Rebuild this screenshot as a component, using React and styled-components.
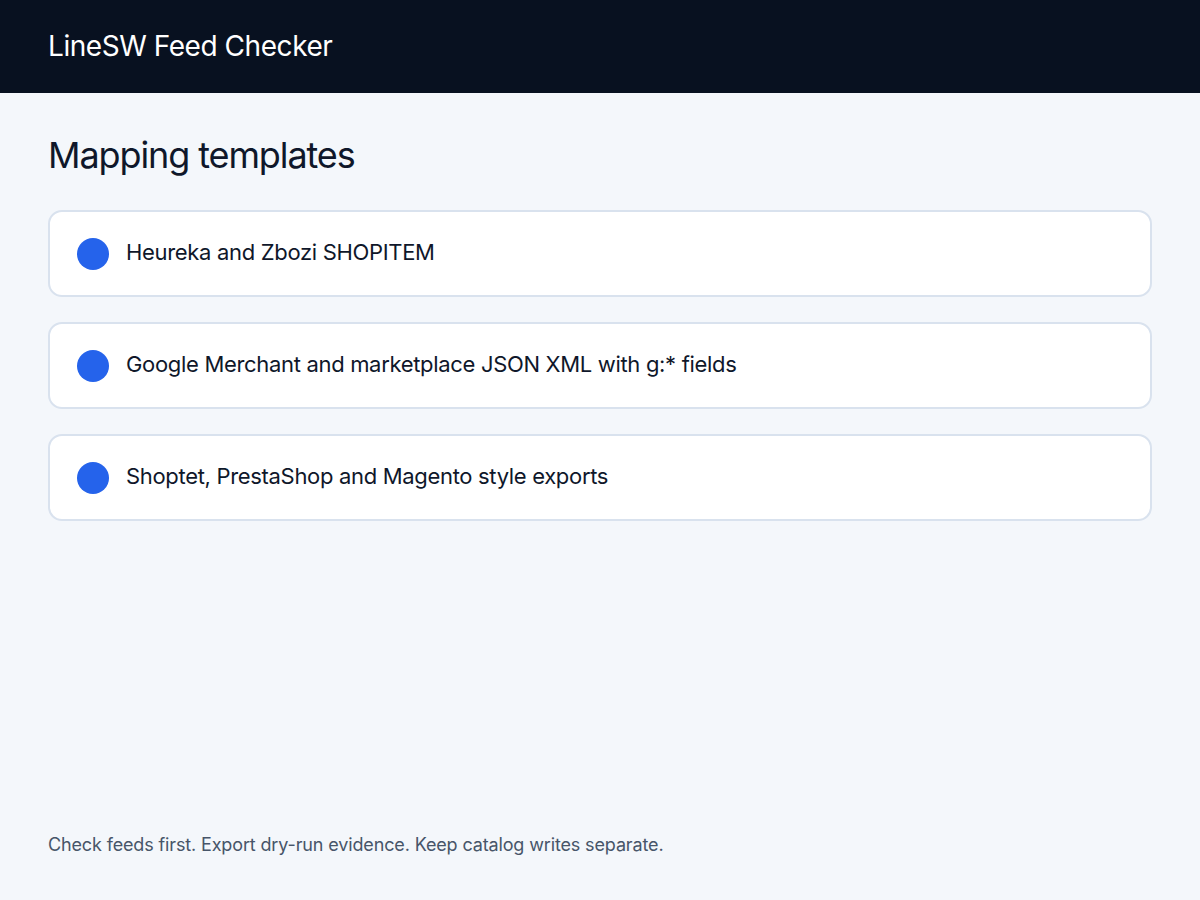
import React from 'react';
import styled, { createGlobalStyle } from 'styled-components';

const GlobalStyle = createGlobalStyle`
    html, body {
        margin: 0;
        padding: 0;
        background-color: #f4f7fb;
        font-family: Inter, "Noto Sans", sans-serif;
    }
    * {
        box-sizing: border-box;
    }
`

const Page = styled.div`
    display: flex;
    flex-flow: column;
    min-height: 100vh;
    background-color: #f4f7fb;
    color: #0f172a;
`

const TopBar = styled.header`
    display: flex;
    align-items: center;
    height: 93px;
    padding: 0px 48px 2px 48px;
    background-color: #081120;
`

const AppTitle = styled.h1`
    margin: 0px;
    font-size: 28px;
    font-weight: 400;
    color: #ffffff;
    letter-spacing: -0.45px;
`

const Main = styled.main`
    display: flex;
    flex-flow: column;
    padding: 40px 48px 0px 48px;
`

const Heading = styled.h2`
    margin: 0px 0px 33px 0px;
    font-size: 36px;
    line-height: 44px;
    font-weight: 400;
    letter-spacing: -1.1px;
`

const TemplateList = styled.div`
    display: flex;
    flex-flow: column;
    gap: 25px;
`

const TemplateCard = styled.div`
    display: flex;
    align-items: center;
    gap: 17px;
    height: 87px;
    padding: 0px 27px;
    background-color: #ffffff;
    border: 2px solid #d9e2ee;
    border-radius: 14px;
`

const Dot = styled.span`
    flex: none;
    width: 32px;
    height: 32px;
    border-radius: 50%;
    background-color: ${props => props.color || '#2563eb'};
`

const CardLabel = styled.span`
    padding-bottom: 4px;
    font-size: 22px;
    letter-spacing: -0.32px;
`

const Footer = styled.footer`
    margin-top: auto;
    padding: 0px 48px 41px 48px;
    font-size: 18px;
    line-height: 28px;
    letter-spacing: -0.14px;
    color: #475569;
`

const templates = [
    'Heureka and Zbozi SHOPITEM',
    'Google Merchant and marketplace JSON XML with g:* fields',
    'Shoptet, PrestaShop and Magento style exports',
];

export default function App() {
    return (
        <Page>
            <GlobalStyle />
            <TopBar>
                <AppTitle>LineSW Feed Checker</AppTitle>
            </TopBar>
            <Main>
                <Heading>Mapping templates</Heading>
                <TemplateList>
                    {templates.map(t =>
                        <TemplateCard key={t}>
                            <Dot />
                            <CardLabel>{t}</CardLabel>
                        </TemplateCard>
                    )}
                </TemplateList>
            </Main>
            <Footer>Check feeds first. Export dry-run evidence. Keep catalog writes separate.</Footer>
        </Page>
    );
}
